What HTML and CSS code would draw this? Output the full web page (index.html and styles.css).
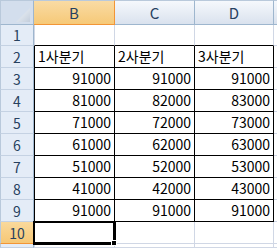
FILE: index.html
```html
<!DOCTYPE html>
<html lang="ko">
<head>
    <meta charset="UTF-8">
    <title>분기 실적</title>
    <link rel="stylesheet" href="styles.css">
</head>
<body>
<div class="sheet">
    <!-- 열 머리글 -->
    <div class="corner">
        <svg class="corner-mark" width="14" height="14" viewBox="0 0 14 14">
            <defs>
                <linearGradient id="cm" x1="0" y1="0" x2="1" y2="1">
                    <stop offset="0" stop-color="#f4f7fb"/>
                    <stop offset="1" stop-color="#c3cedc"/>
                </linearGradient>
            </defs>
            <polygon points="14,0 14,14 0,14" fill="url(#cm)"/>
        </svg>
    </div>
    <div class="col-head is-active">B</div>
    <div class="col-head">C</div>
    <div class="col-head">D</div>
    <div class="col-head col-rest"></div>

    <!-- 1행 -->
    <div class="row-head">1</div>
    <div class="cell first top"></div>
    <div class="cell top"></div>
    <div class="cell top"></div>
    <div class="cell rest"></div>

    <!-- 2행 ~ 9행 -->
    <div class="row-head">2</div>
    <div class="cell t first">1사분기</div>
    <div class="cell t">2사분기</div>
    <div class="cell t">3사분기</div>
    <div class="cell rest"></div>

    <div class="row-head">3</div>
    <div class="cell t first num">91000</div>
    <div class="cell t num">91000</div>
    <div class="cell t num">91000</div>
    <div class="cell rest"></div>

    <div class="row-head">4</div>
    <div class="cell t first num">81000</div>
    <div class="cell t num">82000</div>
    <div class="cell t num">83000</div>
    <div class="cell rest"></div>

    <div class="row-head">5</div>
    <div class="cell t first num">71000</div>
    <div class="cell t num">72000</div>
    <div class="cell t num">73000</div>
    <div class="cell rest"></div>

    <div class="row-head">6</div>
    <div class="cell t first num">61000</div>
    <div class="cell t num">62000</div>
    <div class="cell t num">63000</div>
    <div class="cell rest"></div>

    <div class="row-head">7</div>
    <div class="cell t first num">51000</div>
    <div class="cell t num">52000</div>
    <div class="cell t num">53000</div>
    <div class="cell rest"></div>

    <div class="row-head">8</div>
    <div class="cell t first num">41000</div>
    <div class="cell t num">42000</div>
    <div class="cell t num">43000</div>
    <div class="cell rest"></div>

    <div class="row-head">9</div>
    <div class="cell t first num">91000</div>
    <div class="cell t num">91000</div>
    <div class="cell t num">91000</div>
    <div class="cell rest"></div>

    <!-- 10행 (선택된 셀 B10) -->
    <div class="row-head is-active">10</div>
    <div class="cell first"></div>
    <div class="cell"></div>
    <div class="cell"></div>
    <div class="cell rest"></div>

    <!-- 11행 (일부만 보임) -->
    <div class="row-head"></div>
    <div class="cell first"></div>
    <div class="cell"></div>
    <div class="cell"></div>
    <div class="cell rest"></div>

    <!-- 선택 테두리 + 채우기 핸들 -->
    <div class="selection"><span class="fill-handle"></span></div>
</div>
</body>
</html>
```

FILE: styles.css
```css
* {
    margin: 0;
    padding: 0;
    box-sizing: border-box;
}
body {
    background: #fff;
    font-family: "Noto Sans CJK KR", "Noto Sans", sans-serif;
    font-size: 14px;
}
.sheet {
    position: relative;
    width: 277px;
    height: 248px;
    overflow: hidden;
    display: grid;
    grid-template-columns: 34px 81px 80px 79px 3px;
    grid-template-rows: 25px 21px repeat(9, 22px) 4px;
}

/* 머리글 */
.corner {
    background: #d3deed;
    border-top: 1px solid #b9c9db;
    border-left: 1px solid #b9c9db;
    border-right: 1px solid #9eb6ce;
    border-bottom: 1px solid #9eb6ce;
    position: relative;
}
.corner-mark {
    position: absolute;
    right: 3px;
    bottom: 2px;
}
.col-head {
    background: linear-gradient(#f5f8fc, #dae2ee);
    border-top: 1px solid #b9c9db;
    border-right: 1px solid #9eb6ce;
    border-bottom: 1px solid #9eb6ce;
    color: #27415f;
    font-size: 15px;
    display: flex;
    align-items: center;
    justify-content: center;
}
.col-head.is-active {
    background: linear-gradient(#f9dba4, #f6c978);
    border-right-color: #f29536;
    border-bottom-color: #f29536;
}
.col-rest {
    border-right: none;
}
.row-head {
    background: #e4ecf7;
    border-left: 1px solid #b9c9db;
    border-right: 1px solid #9eb6ce;
    border-bottom: 1px solid #c5d2e3;
    color: #27415f;
    display: flex;
    align-items: center;
    justify-content: center;
}
.row-head.is-active {
    background: linear-gradient(#f9d99c, #f6c775);
    border-right-color: #f29536;
    border-bottom-color: #f29536;
}

/* 셀 */
.cell {
    border-right: 1px solid #d0d7e5;
    border-bottom: 1px solid #d0d7e5;
    color: #000;
    white-space: nowrap;
    display: flex;
    align-items: flex-end;
    padding: 0 3px 1px 3px;
    line-height: 20px;
}
.cell.first {
    border-left: 1px solid #d0d7e5;
}
.cell.top {
    border-bottom-color: #000;
}
.cell.t {
    border-right-color: #000;
    border-bottom-color: #000;
}
.cell.t.first {
    border-left-color: #000;
}
.cell.num {
    justify-content: flex-end;
}
.cell.rest {
    border-right: none;
}

/* 선택 영역 */
.selection {
    position: absolute;
    left: 33px;
    top: 221px;
    width: 83px;
    height: 24px;
    border-top: 2px solid #000;
    border-left: 2px solid #000;
    border-right: 3px solid #000;
    border-bottom: 3px solid #000;
}
.fill-handle {
    position: absolute;
    right: -4px;
    bottom: -4px;
    width: 6px;
    height: 6px;
    background: #000;
    border: 1px solid #fff;
}
```
